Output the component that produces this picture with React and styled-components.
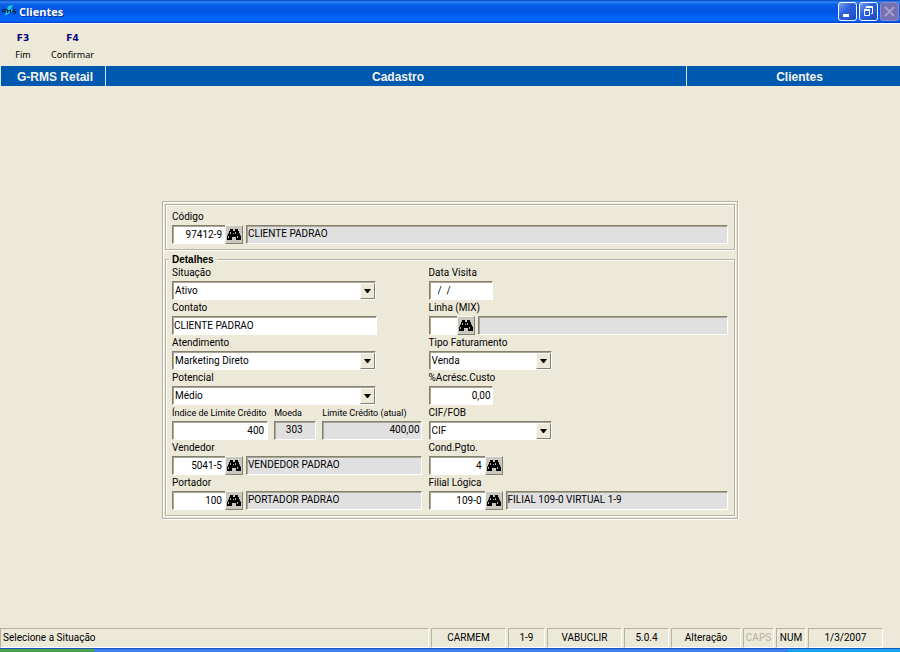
import React from 'react';
import styled, { createGlobalStyle } from 'styled-components';

function App() {
	return (
		<>
			<GlobalStyle />
			<Window>
				<TitleBar>
					<Logo />
					<Title>Clientes</Title>
					<WindowButton aria-label="Minimizar">
						<svg width="17" height="17" viewBox="0 0 17 17">
							<rect x="4" y="11" width="6" height="3" fill="#fff" />
						</svg>
					</WindowButton>
					<WindowButton aria-label="Restaurar">
						<svg width="17" height="17" viewBox="0 0 17 17" fill="none" stroke="#fff">
							<path d="M6 5.5V4.5H12.5V10.5H11M6.5 4.5V3.5H12.5V5" />
							<path d="M4.5 7.5H9.5V12.5H4.5ZM4 6.5H10" />
						</svg>
					</WindowButton>
					<WindowButton aria-label="Fechar" disabled>
						<svg width="17" height="17" viewBox="0 0 17 17">
							<path d="M4 4L13 13M13 4L4 13" stroke="#aaa0c4" strokeWidth="2" />
						</svg>
					</WindowButton>
				</TitleBar>
				<Toolbar>
					<ToolButton>
						<b>F3</b>
						Fim
					</ToolButton>
					<ToolButton>
						<b>F4</b>
						Confirmar
					</ToolButton>
				</Toolbar>
				<Banner>
					<BannerCell $width="105px">G-RMS Retail</BannerCell>
					<BannerCell>Cadastro</BannerCell>
					<BannerCell $width="214px" $indent="12px">
						Clientes
					</BannerCell>
				</Banner>
				<Main>
					<Panel>
						<Group>
							<Lookup
								id="codigo"
								label="Código"
								width="53px"
								value="97412-9"
								description="CLIENTE PADRAO"
							/>
						</Group>
						<Details>
							<Legend>Detalhes</Legend>
							<Column>
								<Select id="situacao" label="Situação" width="204px" options={['Ativo', 'Inativo']} />
								<Field>
									<Label htmlFor="contato">Contato</Label>
									<Input id="contato" $width="205px" defaultValue="CLIENTE PADRAO" />
								</Field>
								<Select
									id="atendimento"
									label="Atendimento"
									width="204px"
									options={['Marketing Direto']}
								/>
								<Select
									id="potencial"
									label="Potencial"
									width="204px"
									options={['Médio', 'Alto', 'Baixo']}
								/>
								<CreditRow>
									<Field>
										<Label htmlFor="indice" $small>
											Índice de Limite Crédito
										</Label>
										<Input id="indice" $align="right" defaultValue="400" />
									</Field>
									<Field>
										<Label htmlFor="moeda" $small>
											Moeda
										</Label>
										<Input id="moeda" $align="center" readOnly value="303" />
									</Field>
									<Field>
										<Label htmlFor="limite" $small>
											Limite Crédito (atual)
										</Label>
										<Input id="limite" $align="right" $flush readOnly value="400,00" />
									</Field>
								</CreditRow>
								<Lookup
									id="vendedor"
									label="Vendedor"
									width="53px"
									value="5041-5"
									description="VENDEDOR PADRAO"
								/>
								<Lookup
									id="portador"
									label="Portador"
									width="53px"
									value="100"
									description="PORTADOR PADRAO"
								/>
							</Column>
							<Column>
								<Field>
									<Label htmlFor="data">Data Visita</Label>
									<Input id="data" $width="64px" $indent="8px" defaultValue="/  /" />
								</Field>
								<Lookup id="linha" label="Linha (MIX)" width="28px" value="" description="" />
								<Select id="tipo" label="Tipo Faturamento" width="123px" options={['Venda']} />
								<Field>
									<Label htmlFor="acrescimo">%Acrésc.Custo</Label>
									<Input id="acrescimo" $width="64px" $align="right" $flush defaultValue="0,00" />
								</Field>
								<Select id="frete" label="CIF/FOB" width="123px" options={['CIF', 'FOB']} />
								<Lookup id="pagamento" label="Cond.Pgto." width="56px" value="4" />
								<Lookup
									id="filial"
									label="Filial Lógica"
									width="56px"
									value="109-0"
									description="FILIAL 109-0 VIRTUAL 1-9"
								/>
							</Column>
						</Details>
					</Panel>
				</Main>
				<StatusBar>
					<Status>Selecione a Situação</Status>
					<Status $width="75px">CARMEM</Status>
					<Status $width="37px">1-9</Status>
					<Status $width="75px">VABUCLIR</Status>
					<Status $width="45px">5.0.4</Status>
					<Status $width="70px">Alteração</Status>
					<Status $width="31px" $off>
						CAPS
					</Status>
					<Status $width="30px">NUM</Status>
					<Status $width="75px">1/3/2007</Status>
				</StatusBar>
				<Taskbar>
					<StartEdge />
					<TrayEdge />
				</Taskbar>
			</Window>
		</>
	);
}

function Logo() {
	return (
		<svg width="16" height="18" viewBox="0 0 16 18">
			<path d="M4 14L7 4L12 3L10 7H13L7 12Z" fill="#19cbd5" />
			<path
				d="M1.5 11V7.5H4.5V9.5H1.5M6.5 11V7.5L8 9.5L9.5 7.5V11M14.5 7.5H12V9.5H14.5V11.5H12"
				fill="none"
				stroke="#06283f"
			/>
		</svg>
	);
}

function Binoculars() {
	return (
		<svg width="14" height="13" viewBox="0 0 14 13">
			<path
				d="M3 1H6V3H8V1H11V3H12V5L13 6V7L14 8V12H9V9H5V12H0V8L1 7V6L2 5V3H3Z"
				fill="#000"
			/>
			<path
				d="M3.5 4V6M1.5 8V10M8.5 4V6M10.5 8V10M6.5 5V6"
				stroke="#b0b0b0"
				fill="none"
			/>
		</svg>
	);
}

function Lookup({ id, label, width, value, description }) {
	return (
		<Field>
			<Label htmlFor={id}>{label}</Label>
			<LookupRow>
				<Input id={id} $width={width} $align="right" $open defaultValue={value} />
				<SearchButton type="button" aria-label={`Pesquisar ${label}`}>
					<Binoculars />
				</SearchButton>
				{description !== undefined && (
					<Description readOnly value={description} aria-label={`${label} descrição`} />
				)}
			</LookupRow>
		</Field>
	);
}

function Select({ id, label, width, options }) {
	return (
		<Field>
			<Label htmlFor={id}>{label}</Label>
			<SelectBox $width={width}>
				<NativeSelect id={id}>
					{options.map(x => (
						<option key={x}>{x}</option>
					))}
				</NativeSelect>
				<Arrow>
					<svg width="7" height="4" viewBox="0 0 7 4">
						<path d="M0 0H7L4 4H3Z" />
					</svg>
				</Arrow>
			</SelectBox>
		</Field>
	);
}

const GlobalStyle = createGlobalStyle`
	*, *::before, *::after {
		box-sizing: border-box;
	}

	body {
		margin: 0;
		background: #ece9d8;
	}

	body, button, input, select {
		font-family: Roboto, "Liberation Sans", sans-serif;
		font-size: 10px;
		color: #000;
	}

	svg {
		display: block;
	}
`;

const Window = styled.div`
	display: flex;
	flex-direction: column;
	min-height: 100vh;
`;

const TitleBar = styled.header`
	display: flex;
	align-items: center;
	gap: 2px;
	height: 23px;
	padding: 0 1px 1px 1px;
	background: linear-gradient(
		#0842b8 0%,
		#2b85f5 8%,
		#0a5de6 20%,
		#0054e3 50%,
		#0463fb 75%,
		#0567ff 88%,
		#0040c8 100%
	);
`;

const Title = styled.h1`
	flex: 1;
	margin: 0;
	font-family: 'Open Sans', sans-serif;
	font-size: 11px;
	font-weight: bold;
	color: #fff;
	text-shadow: 1px 1px #0a3494;
`;

const WindowButton = styled.button`
	width: 19px;
	height: 19px;
	padding: 0;
	border: 1px solid #fff;
	border-radius: 3px;
	background: linear-gradient(135deg, #7ba2f0, #2d62dc 40%, #2558d2 70%, #1744b4);

	&:disabled {
		border-color: #8c8ccb;
		background: #7571b4;
	}
`;

const Toolbar = styled.nav`
	display: flex;
	gap: 13px;
	height: 43px;
	padding: 6px 8px;
	border-top: 1px solid #fff;
`;

const ToolButton = styled.button`
	display: flex;
	flex-direction: column;
	align-items: center;
	min-width: 30px;
	padding: 0;
	border: 0;
	background: none;
	font-family: 'Noto Sans', sans-serif;
	font-size: 9px;
	line-height: 16px;

	b {
		font-family: 'DejaVu Sans', sans-serif;
		line-height: 17px;
		color: #000080;
	}
`;

const Banner = styled.div`
	display: flex;
	height: 20px;
	background: #0058b0;
`;

const BannerCell = styled.div`
	flex: ${p => (p.$width ? `0 0 ${p.$width}` : 1)};
	padding-left: ${p => p.$indent || '4px'};
	border-left: 1px solid #d8e8f4;
	font-family: 'Liberation Sans', sans-serif;
	font-size: 12px;
	font-weight: bold;
	line-height: 22px;
	text-align: center;
	color: #f4f4ec;
`;

const Main = styled.main`
	display: flex;
	flex: 1;
	align-items: center;
	justify-content: center;
	padding-top: 6px;
`;

const Panel = styled.form`
	width: 64%;
	min-width: 560px;
	padding: 2px;
	border: 1px solid #b5b2a2;
	box-shadow: inset 1px 1px #fff, 1px 1px #fff;
`;

const Group = styled.div`
	padding: 4px 6px 5px 6px;
	border: 1px solid #b5b2a2;
	box-shadow: inset 1px 1px #fff, 1px 1px #fff;
`;

const Details = styled.section`
	display: grid;
	grid-template-columns: minmax(0, 5fr) minmax(0, 6fr);
	column-gap: 7px;
	position: relative;
	margin-top: 9px;
	padding: 5px 6px;
	border: 1px solid #b5b2a2;
	box-shadow: inset 1px 1px #fff, 1px 1px #fff;
`;

/* sits on the top edge of the group box */
const Legend = styled.h2`
	position: absolute;
	top: -7px;
	left: 3px;
	margin: 0;
	padding: 0 3px;
	background: #ece9d8;
	font-family: 'Liberation Sans', sans-serif;
	font-size: 10px;
	line-height: 14px;
`;

const Column = styled.div`
	display: flex;
	flex-direction: column;
`;

const Field = styled.div`
	min-width: 0;
`;

const Label = styled.label`
	display: block;
	font-size: ${p => (p.$small ? '9px' : '10px')};
	line-height: 16px;
	white-space: nowrap;
`;

const Input = styled.input`
	display: block;
	width: ${p => p.$width || '100%'};
	height: 19px;
	padding: 0 ${p => (p.$flush ? '1px' : '3px')} 0 ${p => p.$indent || '1px'};
	border: 1px solid;
	border-color: #85816f #fff #fff #85816f;
	border-right-width: ${p => (p.$open ? 0 : '1px')};
	border-radius: 0;
	outline: 0;
	background: #fff;
	box-shadow: inset 1px 1px #aaa695;
	text-align: ${p => p.$align || 'left'};
	white-space: pre;

	&:read-only {
		padding-bottom: 2px;
		background: #e0e0e0;
	}
`;

const Description = styled(Input)`
	flex: 1;
	width: auto;
	min-width: 0;
	margin-left: 3px;
`;

const LookupRow = styled.div`
	display: flex;
`;

const SearchButton = styled.button`
	display: grid;
	place-content: center;
	width: 18px;
	height: 19px;
	padding: 0;
	border: 1px solid;
	border-color: #f4f2e8 #85816f #85816f #f4f2e8;
	background: #c9c8c0;
`;

const CreditRow = styled.div`
	display: grid;
	grid-template-columns: 96fr 42fr 99fr;
	column-gap: 6px;
`;

const SelectBox = styled.div`
	position: relative;
	width: ${p => p.$width};
	height: 19px;
	border: 1px solid;
	border-color: #85816f #fff #fff #85816f;
	background: #fff;
	box-shadow: inset 1px 1px #aaa695;
`;

const NativeSelect = styled.select`
	display: block;
	width: 100%;
	height: 17px;
	padding: 0 18px 0 2px;
	appearance: none;
	border: 0;
	outline: 0;
	background: none;
`;

const Arrow = styled.span`
	position: absolute;
	top: 1px;
	right: 0;
	display: grid;
	place-content: center;
	width: 15px;
	height: 16px;
	border: 1px solid;
	border-color: #faf9f2 #85816f #85816f #faf9f2;
	background: #ece9d8;
	pointer-events: none;
`;

const StatusBar = styled.footer`
	display: flex;
	gap: 2px;
	height: 20px;
	padding-right: 17px;
`;

const Status = styled.div`
	flex: ${p => (p.$width ? `0 0 ${p.$width}` : 1)};
	min-width: 0;
	padding: 0 ${p => (p.$width ? 0 : '2px')};
	border: 1px solid;
	border-color: #b5b2a2 #fff #fff #b5b2a2;
	line-height: 18px;
	text-align: ${p => (p.$width ? 'center' : 'left')};
	color: ${p => (p.$off ? '#b5b2a2' : '#000')};
	white-space: nowrap;
`;

const Taskbar = styled.div`
	display: flex;
	justify-content: space-between;
	height: 4px;
	border-top: 1px solid #1d56c0;
	background: #3a80ee;
`;

const StartEdge = styled.div`
	width: 94px;
	background: #4aa24a;
`;

const TrayEdge = styled.div`
	width: 112px;
	background: #18a4ee;
`;

export default App;
